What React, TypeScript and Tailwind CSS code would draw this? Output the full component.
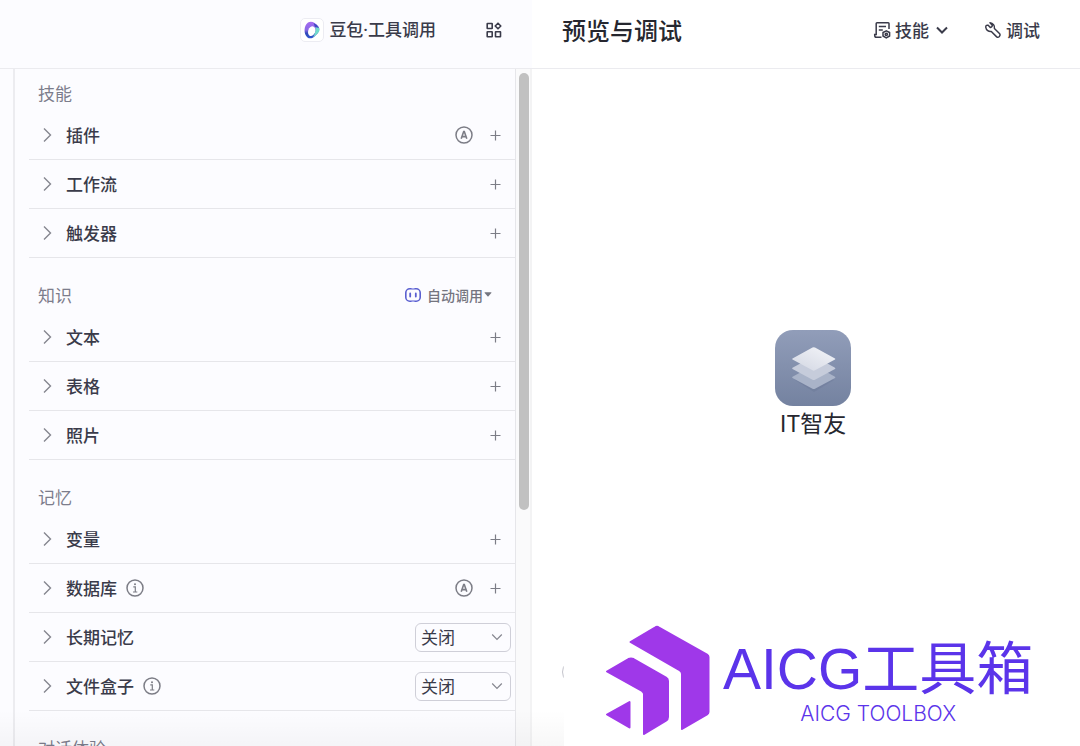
interface Item {
  name: string;
  info?: boolean;
  auto?: boolean;
  select?: boolean;
}

interface Group {
  title: string;
  picker?: boolean;
  items: Item[];
}

const groups: Group[] = [
  {
    title: "技能",
    items: [{ name: "插件", auto: true }, { name: "工作流" }, { name: "触发器" }],
  },
  {
    title: "知识",
    picker: true,
    items: [{ name: "文本" }, { name: "表格" }, { name: "照片" }],
  },
  {
    title: "记忆",
    items: [
      { name: "变量" },
      { name: "数据库", info: true, auto: true },
      { name: "长期记忆", select: true },
      { name: "文件盒子", info: true, select: true },
    ],
  },
  { title: "对话体验", items: [] },
];

const App: React.FC = () => (
  <div className="grid h-screen grid-cols-[532fr_548fr] overflow-hidden bg-white font-['Noto_Sans_CJK_SC',sans-serif] text-[17px] leading-6 text-[#3a3b4a]">
    <Settings />
    <Preview />
  </div>
);

export default App;

/*******************
 * Panels
 */

const Settings = () => (
  <section className="relative flex min-h-0 flex-col bg-[#fcfcff]">
    <header className="flex h-[69px] shrink-0 items-center justify-end gap-[50px] border-b border-[#ebebef] pr-[30px] pb-2">
      <button className="flex items-center gap-[5px] font-['Noto_Sans','Noto_Sans_CJK_SC',sans-serif] font-medium">
        <ModelLogo />
        豆包·工具调用
      </button>
      <button aria-label="布局">
        <GridIcon />
      </button>
    </header>
    <div className="flex min-h-0 flex-1 pl-[13px]">
      <div className="min-w-0 flex-1 overflow-hidden border-r border-l-2 border-r-[#e6e6ea] border-l-[#ececf0] pt-[9px] pl-[14px]">
        {groups.map((group) => (
          <SettingGroup key={group.title} group={group} />
        ))}
      </div>
      <div className="w-4 border-r-2 border-[#f3f3f4] bg-[#fafafb] pt-1 pl-[3px]">
        <div className="h-[65%] w-[10px] rounded-full bg-[#c1c1c1]" />
      </div>
    </div>
    <BottomShade />
  </section>
);

const Preview = () => (
  <main className="relative flex min-h-0 flex-col">
    <header className="flex h-[69px] shrink-0 items-center border-b border-[#ebebef] pr-10 pb-2 pl-[30px]">
      <h1 className="flex-1 text-2xl font-medium text-[#26272f]">预览与调试</h1>
      <button className="flex items-center gap-1 font-medium">
        <SkillIcon />
        技能
        <svg viewBox="0 0 12 8" className="ml-[3px] w-3" fill="none" stroke="currentColor" strokeWidth="2">
          <path d="M1 1.5l5 5 5-5" />
        </svg>
      </button>
      <button className="ml-9 flex items-center gap-1 font-medium">
        <WrenchIcon />
        调试
      </button>
    </header>
    <div className="flex flex-1 flex-col items-center justify-center pb-12 pl-[14px]">
      <BotAvatar />
      <p className="text-[23px] leading-8 text-[#26272f]">IT智友</p>
    </div>
    <BottomShade />
    <div className="absolute bottom-[62px] left-[30px] size-6 rounded-full border border-[#c4c4cc]" />
    <Brand />
  </main>
);

const Brand = () => (
  <div className="absolute right-0 bottom-0 left-8 flex h-[126px] items-center gap-[13px] bg-white pt-[5px] pb-[10px] pl-[41px] text-[#5b34ea]">
    <svg viewBox="0 0 105 111" className="w-[105px] shrink-0" fill="#9f38e9" stroke="#9f38e9" strokeWidth="2" strokeLinejoin="round">
      <path d="M25.5 17 50 2.500Q52 1.200 54 2.500L102 29.500Q103.500 30.500 103.500 32V87Q103.500 88.500 102 89.500L77 104V49Q77 46.500 75 45.500Z" />
      <path d="M2 46.500 23.500 34Q26 32.800 28.500 34L61 52.500Q63 53.700 63 56V92Q63 94.500 61 95.700L39 109V69Q39 67 37 66Z" />
      <path d="M2 89.500 24.500 77V102.500Z" />
    </svg>
    <div className="flex flex-col items-center whitespace-nowrap">
      <p className="font-['Liberation_Sans','Noto_Sans_CJK_SC',sans-serif] text-[57px] leading-[66px]">
        AICG工具箱
      </p>
      <p className="font-['Inter',sans-serif] text-[21px] leading-6 font-light">AICG TOOLBOX</p>
    </div>
  </div>
);

/*******************
 * Components
 */

const SettingGroup = ({ group }: { group: Group }) => (
  <section className="mb-[22px]">
    <div className="flex h-[33px] items-center justify-between pr-[23px] pb-1 pl-[9px]">
      <h2 className="text-[#7c7d8c]">{group.title}</h2>
      {group.picker && (
        <button className="flex items-center text-sm font-medium text-[#74757f]">
          <svg viewBox="0 0 16 14" className="mr-[6px] w-4" fill="none" stroke="#5a5fd0" strokeWidth="1.600">
            <rect x="0.800" y="0.800" width="14.400" height="12.400" rx="4" />
            <path d="M5.200 5.500v3M10.800 5.500v3" strokeWidth="1.800" strokeLinecap="round" />
            <path d="M6.500 .8h3M6.500 13.200h3" stroke="#a3a6ea" />
          </svg>
          自动调用
          <svg viewBox="0 0 8 5" className="ml-px w-2" fill="currentColor">
            <path d="M1 .3h6q.8 0 .3.700L4.500 4.200q-.5.500-1 0L.7 1Q.2.300 1 .3Z" />
          </svg>
        </button>
      )}
    </div>
    {group.items.map((item) => (
      <SettingRow key={item.name} item={item} />
    ))}
  </section>
);

const SettingRow = ({ item }: { item: Item }) => (
  <div className="flex h-[49px] items-center border-b border-[#e6e6ea] pl-[14px] text-[#7c7d86]">
    <button className="flex items-center gap-[14px] font-medium text-[#3a3b4a]">
      <svg viewBox="0 0 9 16" className="w-[9px]" fill="none" stroke="#85868f" strokeWidth="1.400">
        <path d="M1 1.500 7.500 8 1 14.500" />
      </svg>
      {item.name}
    </button>
    {item.info && (
      <svg viewBox="0 0 18 18" className="ml-[9px] w-[18px]" fill="none" stroke="currentColor" strokeWidth="1.500">
        <circle cx="9" cy="9" r="8" />
        <path d="M7.300 7.800h2V13M7 13h4.300" strokeWidth="1.200" />
        <circle cx="9" cy="5.300" r="1" fill="currentColor" stroke="none" />
      </svg>
    )}
    <div className="flex-1" />
    {item.auto && <AutoIcon />}
    {item.select ? (
      <label className="relative mr-1 flex items-center">
        <select
          aria-label={item.name}
          className="h-[29px] w-24 appearance-none rounded-md border border-[#cfcfd8] bg-transparent pl-[5px] leading-6 text-[#3a3b4a]"
        >
          <option>关闭</option>
          <option>开启</option>
        </select>
        <svg viewBox="0 0 12 8" className="pointer-events-none absolute right-2 w-3" fill="none" stroke="#85868f" strokeWidth="1.200">
          <path d="M1.200 1.500 6 6.300l4.800-4.800" />
        </svg>
      </label>
    ) : (
      <button aria-label={`添加${item.name}`} className="mr-[14px]">
        <svg viewBox="0 0 11 11" className="w-[11px]" fill="none" stroke="currentColor" strokeWidth="1.200">
          <path d="M5.500 .5v10M.5 5.500h10" />
        </svg>
      </button>
    )}
  </div>
);

const BottomShade = () => (
  <div className="pointer-events-none absolute inset-x-0 bottom-0 h-9 bg-linear-to-b from-transparent to-black/3" />
);

/*******************
 * Icons
 */

const AutoIcon = () => (
  <svg viewBox="0 0 18 18" className="mr-[17px] w-[18px]" fill="none" stroke="currentColor" strokeWidth="1.500">
    <circle cx="9" cy="9" r="8" />
    <path d="M6.200 12.800 8.700 5.500h.6l2.500 7.300M7 10.600h4" strokeWidth="1.600" />
  </svg>
);

const ModelLogo = () => (
  <svg viewBox="0 0 24 24" className="w-6">
    <defs>
      <linearGradient id="ring" x1="0" y1="0" x2="0" y2="1">
        <stop offset="0" stopColor="#a66cf0" />
        <stop offset="0.500" stopColor="#8a68e6" />
        <stop offset="0.700" stopColor="#2f48b8" />
        <stop offset="1" stopColor="#2f58d0" />
      </linearGradient>
    </defs>
    <rect x="0.500" y="0.500" width="23" height="23" rx="4.500" fill="#fff" stroke="#ececf2" />
    <path d="M8 4.500C11 2.500 15 4 18.500 8.500C20.500 11.500 18.500 15 15 18C13 20.500 9.500 21 7.500 19.500C3.500 16.500 3.500 7.500 8 4.500Z" fill="url(#ring)" />
    <path d="M15.500 7.500Q18.300 8 19.300 10.500C20.300 13 18 15.500 13 19.300Q16.500 13.500 15.500 7.500Z" fill="#6fdccb" />
    <path d="M13.500 5Q17.500 6.500 19 10L15 9Z" fill="#3f49c4" />
    <ellipse cx="11.700" cy="13.200" rx="3.500" ry="5" transform="rotate(18 11.700 13.200)" fill="#fff" />
  </svg>
);

const GridIcon = () => (
  <svg viewBox="0 0 16 16" className="w-4" fill="none" stroke="currentColor" strokeWidth="1.600" strokeLinejoin="round">
    <rect x="1.200" y="1.500" width="5" height="5" rx="0.300" />
    <rect x="1.200" y="9.800" width="5" height="5" rx="0.300" />
    <rect x="9.500" y="9.800" width="5" height="5" rx="0.300" />
    <path d="M12 1.200 14.800 4 12 6.800 9.200 4Z" />
  </svg>
);

const SkillIcon = () => (
  <svg viewBox="0 0 18 18" className="w-[18px]" fill="none" stroke="currentColor" strokeWidth="1.500">
    <path d="M8.500 16.300H3.500Q1.700 16.300 1.700 14.500V13.500H3.200V2.500Q3.200 1.700 4 1.700H15.200Q16 1.700 16 2.500V8" />
    <path d="M5.800 5.500h7.200M5.800 9h4" />
    <path d="M13.300 9.800 16.600 11.500V15L13.300 16.900 10 15V11.500Z" strokeLinejoin="round" />
    <circle cx="13.300" cy="13.300" r="1.100" />
  </svg>
);

const WrenchIcon = () => (
  <svg viewBox="0 0 18 18" className="w-[18px]" fill="none" stroke="currentColor" strokeWidth="1.500" strokeLinejoin="round">
    <path d="M6 1.700L8.300 4.200Q8.500 6 6.300 6.500L4.200 4.300Q1.500 3.500 1.800 6.500A4.800 4.800 0 0 0 7.300 10.500L12.700 15.900Q14 16.800 15.400 15.500Q16.700 14.100 15.700 12.800L10.400 7.500A4.800 4.800 0 0 0 6 1.700Z" />
  </svg>
);

const BotAvatar = () => (
  <svg viewBox="0 0 76 76" className="w-[76px]">
    <defs>
      <linearGradient id="tile" x1="0" y1="0" x2="0" y2="1">
        <stop offset="0" stopColor="#919db9" />
        <stop offset="1" stopColor="#7482a0" />
      </linearGradient>
      <linearGradient id="sheet" x1="1" y1="0" x2="0.200" y2="1">
        <stop offset="0" stopColor="#f4f5f9" />
        <stop offset="1" stopColor="#d5d9e4" />
      </linearGradient>
    </defs>
    <rect width="76" height="76" rx="18" fill="url(#tile)" />
    <path d="M20 50 39 62 59 50 39 38Z" fill="#5f6d8c" opacity="0.250" />
    <path d="M17.500 46.800Q16.800 47.300 17.500 47.900L37.500 58.800Q38.700 59.400 40 58.800L60 47.900Q60.700 47.300 60 46.800L39 35Z" fill="#a9b3c8" />
    <path d="M17.500 37.800Q16.800 38.300 17.500 38.900L37.500 49.800Q38.700 50.400 40 49.800L60 38.900Q60.700 38.300 60 37.800L39 26Z" fill="#c6ccdb" />
    <path d="M17.500 28.500Q16.800 29 17.500 29.600L37.500 40.300Q38.700 41 40 40.300L60 29.600Q60.700 29 60 28.500L40 17.600Q38.700 17 37.500 17.600Z" fill="url(#sheet)" />
  </svg>
);
